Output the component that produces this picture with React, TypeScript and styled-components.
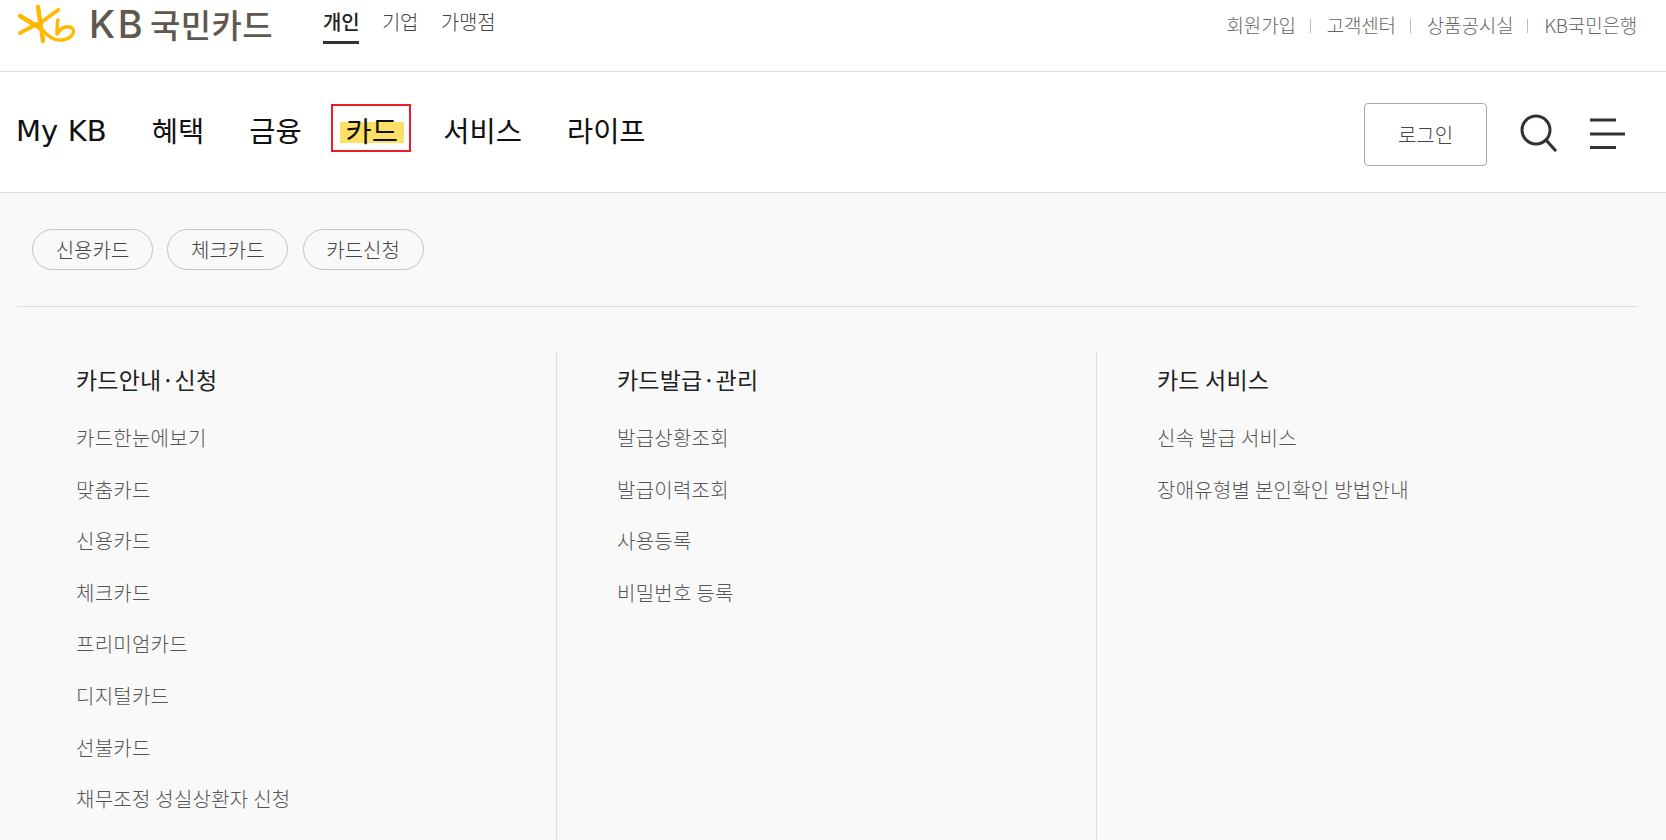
import React from "react";
import styled, { createGlobalStyle } from "styled-components";

const FONT = `"Noto Sans CJK KR", "Noto Sans", sans-serif`;

const GlobalStyle = createGlobalStyle`
  html, body {
    margin: 0;
    padding: 0;
    background: #fff;
    overflow: hidden;
  }
  body {
    font-family: ${FONT};
    font-weight: 300;
  }
  a {
    text-decoration: none;
    color: inherit;
  }
`;

const Page = styled("div")`
  width: 1666px;
  height: 840px;
  overflow: hidden;
  display: flex;
  flex-direction: column;
`;

const TopBar = styled("div")`
  height: 72px;
  flex: none;
  box-sizing: border-box;
  border-bottom: 1px solid #dedede;
  display: flex;
  align-items: flex-start;
  padding: 0 29px 0 17px;
`;

const Logo = styled("a")`
  display: flex;
  align-items: center;
  height: 48px;
  width: 306px;
  flex: none;
  svg {
    margin-left: -7px;
    flex: none;
  }
`;

const LogoLatin = styled("span")`
  font-family: "Inter", sans-serif;
  font-size: 38px;
  font-weight: 500;
  color: #5f584e;
  letter-spacing: 2.5px;
  line-height: 48px;
  margin-left: 13px;
  white-space: nowrap;
`;

const LogoHangul = styled("span")`
  font-size: 33px;
  font-weight: 500;
  color: #5f584e;
  letter-spacing: 0.4px;
  line-height: 48px;
  margin-left: 5px;
  white-space: nowrap;
`;

const SegmentNav = styled("nav")`
  display: flex;
  gap: 22.5px;
`;

const Segment = styled("a")<{ $active?: boolean }>`
  font-size: 20px;
  line-height: 30px;
  letter-spacing: -0.2px;
  height: 44px;
  box-sizing: border-box;
  padding-top: 7px;
  color: ${(p) => (p.$active ? "#222" : "#444")};
  font-weight: ${(p) => (p.$active ? 500 : 300)};
  border-bottom: ${(p) => (p.$active ? "3px solid #333" : "none")};
`;

const UtilNav = styled("div")`
  margin-left: auto;
  display: flex;
  align-items: center;
  height: 48px;
  color: #666;
  font-size: 19px;
  letter-spacing: -0.2px;
`;

const UtilSep = styled("i")`
  display: block;
  width: 1px;
  height: 14px;
  background: #bbb;
  margin: 3px 16px 0 14px;
`;

const MainBar = styled("div")`
  height: 121px;
  flex: none;
  box-sizing: border-box;
  border-bottom: 1px solid #dedede;
  display: flex;
  align-items: center;
  padding: 0 40px 0 16px;
`;

const MainNav = styled("nav")`
  display: flex;
  align-items: center;
  gap: 45px;
  margin-top: -4px;
`;

const MainLink = styled("a")`
  font-size: 28.5px;
  line-height: 40px;
  color: #111;
  font-weight: 400;
  white-space: nowrap;
`;

const LatinLabel = styled("span")`
  font-family: "DejaVu Sans", sans-serif;
  font-size: 29px;
  letter-spacing: 0.1px;
`;

const Outlined = styled("span")`
  display: block;
  box-sizing: border-box;
  width: 80px;
  height: 48px;
  border: 2px solid #ee1c25;
  padding-left: 7px;
  margin: -2px -12.5px 2px -16px;
`;

const Highlight = styled("span")`
  display: block;
  width: 64px;
  height: 44px;
  line-height: 48px;
  text-align: center;
  background: linear-gradient(#ffe066, #ffe066) no-repeat 0 16px / 100% 21px;
`;

const MainActions = styled("div")`
  margin-left: auto;
  display: flex;
  align-items: center;
  margin-top: 2px;
`;

const LoginButton = styled("button")`
  width: 123px;
  height: 63px;
  box-sizing: border-box;
  border: 1px solid #a8a8a8;
  border-radius: 4px;
  background: #fff;
  font-family: ${FONT};
  font-weight: 300;
  font-size: 20px;
  color: #444;
  margin: 2px 32px 0 0;
  padding: 0;
`;

const IconButton = styled("span")<{ $gap?: number }>`
  display: block;
  line-height: 0;
  margin-left: ${(p) => p.$gap ?? 0}px;
`;

const Panel = styled("div")`
  flex: 1;
  background: #f9f9f9;
  padding: 36px 28px 0 17px;
`;

const ChipRow = styled("div")`
  display: flex;
  gap: 14.3px;
  padding: 0 0 35.5px 15px;
  border-bottom: 1px solid #dedede;
`;

const Chip = styled("a")`
  box-sizing: border-box;
  width: 121px;
  height: 41px;
  border: 1px solid #c4c4c4;
  border-radius: 21px;
  display: flex;
  align-items: center;
  justify-content: center;
  font-size: 20px;
  color: #444;
`;

const Columns = styled("div")`
  display: grid;
  grid-template-columns: 540px 540px 1fr;
  margin-top: 45px;
`;

const Column = styled("section")`
  height: 520px;
  box-sizing: border-box;
  padding: 7px 0 0 60px;
  border-right: 1px solid #dcdcdc;
  &:first-child {
    padding-left: 59px;
  }
  &:last-child {
    border-right: none;
  }
`;

const ColumnTitle = styled("h3")`
  margin: 0 0 24.5px;
  font-size: 23px;
  line-height: 40px;
  font-weight: 400;
  letter-spacing: 0.2px;
  color: #222;
`;

const ItemList = styled("ul")`
  list-style: none;
  margin: 0;
  padding: 0;
  display: flex;
  flex-direction: column;
  gap: 21.6px;
`;

const Item = styled("li")`
  font-size: 20px;
  line-height: 30px;
  letter-spacing: 0.25px;
  color: #555;
  white-space: nowrap;
`;

const COLUMNS = [
  {
    title: "카드안내·신청",
    items: [
      "카드한눈에보기",
      "맞춤카드",
      "신용카드",
      "체크카드",
      "프리미엄카드",
      "디지털카드",
      "선불카드",
      "채무조정 성실상환자 신청",
    ],
  },
  {
    title: "카드발급·관리",
    items: ["발급상황조회", "발급이력조회", "사용등록", "비밀번호 등록"],
  },
  {
    title: "카드 서비스",
    items: ["신속 발급 서비스", "장애유형별 본인확인 방법안내"],
  },
];

function LogoMark() {
  return (
    <svg width="66" height="47" viewBox="10 0 66 47" fill="none">
      <g stroke="#ffb900" strokeLinecap="round" strokeLinejoin="round">
        <path d="M38 6 L43 40" strokeWidth="4.4" />
        <path d="M20 15 L40 27" strokeWidth="4.4" />
        <path d="M20 32 L37 23" strokeWidth="4" />
        <path d="M39 23 L58 9" strokeWidth="4" />
        <path
          d="M41 27 C47 35 53 40 62 39 C72 38 76 30 72 27 C67 24 60 27 57 33 C57 27 57 23 58 19"
          strokeWidth="3.4"
        />
      </g>
    </svg>
  );
}

export default function App() {
  return (
    <Page>
      <GlobalStyle />
      <TopBar>
        <Logo href="#">
          <LogoMark />
          <LogoLatin>KB</LogoLatin>
          <LogoHangul>국민카드</LogoHangul>
        </Logo>
        <SegmentNav>
          <Segment href="#" $active>개인</Segment>
          <Segment href="#">기업</Segment>
          <Segment href="#">가맹점</Segment>
        </SegmentNav>
        <UtilNav>
          <a href="#">회원가입</a>
          <UtilSep />
          <a href="#">고객센터</a>
          <UtilSep />
          <a href="#">상품공시실</a>
          <UtilSep />
          <a href="#">KB국민은행</a>
        </UtilNav>
      </TopBar>
      <MainBar>
        <MainNav>
          <MainLink href="#"><LatinLabel>My KB</LatinLabel></MainLink>
          <MainLink href="#">혜택</MainLink>
          <MainLink href="#">금융</MainLink>
          <MainLink href="#">
            <Outlined>
              <Highlight>카드</Highlight>
            </Outlined>
          </MainLink>
          <MainLink href="#">서비스</MainLink>
          <MainLink href="#">라이프</MainLink>
        </MainNav>
        <MainActions>
          <LoginButton>로그인</LoginButton>
          <IconButton>
            <svg width="38" height="38" viewBox="0 0 38 38" fill="none" stroke="#333">
              <circle cx="17" cy="16" r="14" strokeWidth="3" />
              <path d="M27 26 L36 36" strokeWidth="3.2" strokeLinecap="round" />
            </svg>
          </IconButton>
          <IconButton $gap={33}>
            <svg width="36" height="32" viewBox="0 0 36 32" fill="none" stroke="#333" strokeWidth="3">
              <path d="M0 3 H26" />
              <path d="M0 17 H35" />
              <path d="M0 30.5 H26" />
            </svg>
          </IconButton>
        </MainActions>
      </MainBar>
      <Panel>
        <ChipRow>
          <Chip href="#">신용카드</Chip>
          <Chip href="#">체크카드</Chip>
          <Chip href="#">카드신청</Chip>
        </ChipRow>
        <Columns>
          {COLUMNS.map((col) => (
            <Column key={col.title}>
              <ColumnTitle>{col.title}</ColumnTitle>
              <ItemList>
                {col.items.map((item) => (
                  <Item key={item}>{item}</Item>
                ))}
              </ItemList>
            </Column>
          ))}
        </Columns>
      </Panel>
    </Page>
  );
}
